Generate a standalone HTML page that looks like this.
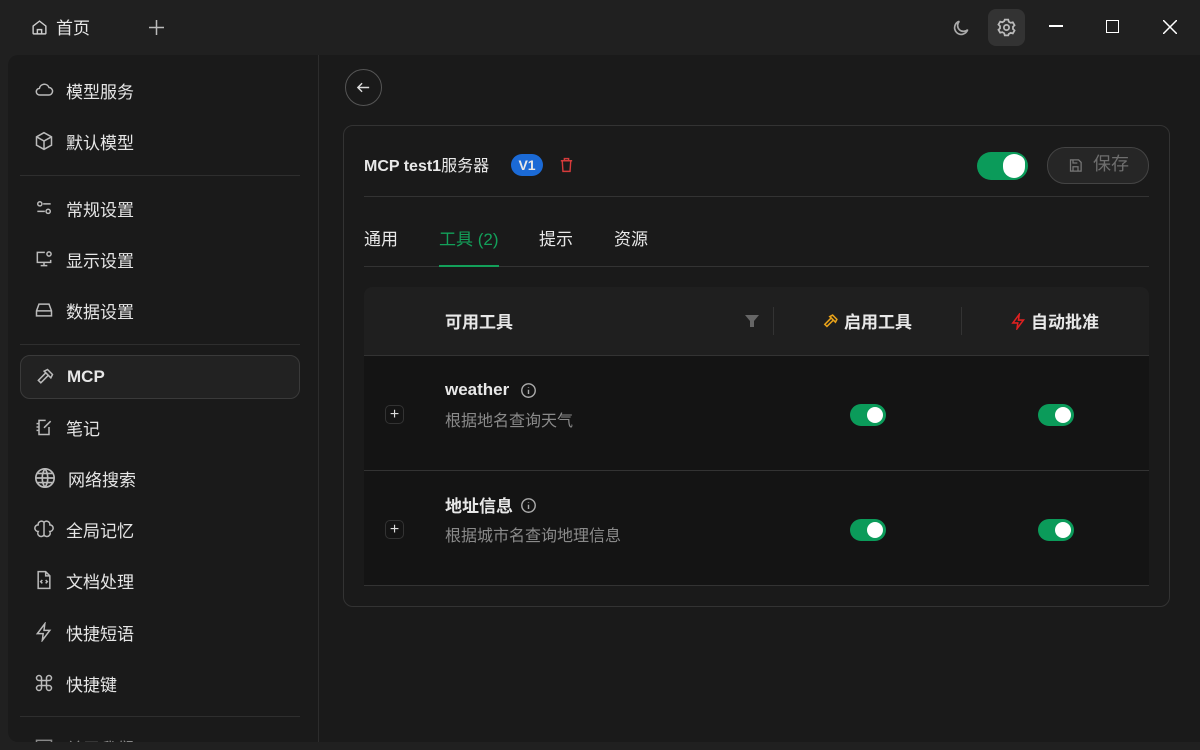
<!DOCTYPE html>
<html><head><meta charset="utf-8"><style>
*{box-sizing:border-box;margin:0;padding:0}
body{width:1200px;height:750px;background:#202020;font-family:"Liberation Sans","Noto Sans CJK SC",sans-serif;color:#e8e8e8;overflow:hidden;position:relative}
.abs{position:absolute}
svg{display:block}
.top{height:55px}
.main{left:8px;top:55px;width:1192px;height:687px;background:#1a1a1a;border-radius:10px 0 0 10px;overflow:hidden}
.side{left:0;top:0;width:311px;height:700px;border-right:1px solid #2c2c2c}
.item{position:absolute;left:12px;width:280px;height:44px;display:flex;align-items:center;padding-left:14px;font-size:17px;color:#e6e6e6}
.item svg{margin-right:12px}
.sep{position:absolute;left:12px;width:280px;height:1px;background:#2e2e2e}
.card{left:335px;top:70px;width:827px;height:482px;border:1px solid #333;border-radius:10px}
.tog{position:absolute;width:36px;height:22px;border-radius:11px;background:#0b9b5a}
.tog:after{content:"";position:absolute;right:3px;top:3px;width:16px;height:16px;border-radius:50%;background:#fff}
</style></head><body>
<svg class="abs" style="left:31px;top:19px" width="17" height="17" viewBox="0 0 24 24" fill="none" stroke="#ccc" stroke-width="2"><path d="M3 10l9-7 9 7v10a1 1 0 0 1-1 1H4a1 1 0 0 1-1-1z"/><path d="M9 21v-6h6v6"/></svg>
<div class="abs" style="left:56px;top:14px;font-size:17px">首页</div>
<svg class="abs" style="left:148px;top:19px" width="17" height="17" viewBox="0 0 17 17" stroke="#bbb" stroke-width="1.5"><path d="M8.5 1v15M1 8.5h15"/></svg>
<svg class="abs" style="left:951px;top:18px" width="20" height="20" viewBox="0 0 24 24" fill="none" stroke="#aaa" stroke-width="2"><path d="M20 14A8 8 0 1 1 10 4a6 6 0 0 0 10 10z"/></svg>
<div class="abs" style="left:988px;top:9px;width:37px;height:37px;border-radius:8px;background:#333"></div>
<svg class="abs" style="left:996px;top:17px" width="21" height="21" viewBox="0 0 24 24" fill="none" stroke="#bbb" stroke-width="2"><circle cx="12" cy="12" r="3"/><path d="M10 3h4l.6 2.4 2.2 1.3 2.4-.7 2 3.4-1.8 1.7v2.6l1.8 1.7-2 3.4-2.4-.7-2.2 1.3L14 21h-4l-.6-2.4-2.2-1.3-2.4.7-2-3.4L4.6 13v-2.6L2.8 8.7l2-3.4 2.4.7 2.2-1.3z"/></svg>
<div class="abs" style="left:1049px;top:25px;width:14px;height:1.5px;background:#fff"></div>
<div class="abs" style="left:1106px;top:20px;width:13px;height:13px;border:1.5px solid #fff"></div>
<svg class="abs" style="left:1163px;top:20px" width="14" height="14" viewBox="0 0 14 14" stroke="#fff" stroke-width="1.5"><path d="M0 0L14 14M14 0L0 14"/></svg>

<div class="abs main">
 <div class="abs side">
  <div class="item" style="top:13px"><svg width="20" height="20" viewBox="0 0 24 24" fill="none" stroke="#bbb" stroke-width="1.8"><path d="M7 18a4 4 0 0 1-.5-8A6 6 0 0 1 18 9a4.5 4.5 0 0 1-.5 9z"/></svg>模型服务</div>
  <div class="item" style="top:64px"><svg width="20" height="20" viewBox="0 0 24 24" fill="none" stroke="#bbb" stroke-width="1.8"><path d="M12 2l9 5v10l-9 5-9-5V7z"/><path d="M3 7l9 5 9-5M12 12v10"/></svg>默认模型</div>
  <div class="sep" style="top:120px"></div>
  <div class="item" style="top:131px"><svg width="20" height="20" viewBox="0 0 24 24" fill="none" stroke="#bbb" stroke-width="1.8"><circle cx="7" cy="7" r="2.5"/><circle cx="17" cy="16" r="2.5"/><path d="M11 7h9M4 16h9"/></svg>常规设置</div>
  <div class="item" style="top:182px"><svg width="20" height="20" viewBox="0 0 24 24" fill="none" stroke="#bbb" stroke-width="1.8"><path d="M13 4H4v12h16v-3M8 20h8M12 16v4"/><circle cx="18" cy="6" r="2.5"/></svg>显示设置</div>
  <div class="item" style="top:233px"><svg width="20" height="20" viewBox="0 0 24 24" fill="none" stroke="#bbb" stroke-width="1.8"><path d="M3 13l3-8h12l3 8v6H3z M3 13h18"/></svg>数据设置</div>
  <div class="sep" style="top:289px"></div>
  <div class="item" style="top:300px;border:1px solid #3a3a3a;background:#222;border-radius:10px;font-weight:bold"><svg width="20" height="20" viewBox="0 0 24 24" fill="none" stroke="#bbb" stroke-width="1.8"><path d="M13 7l-9 9 3 3 9-9M11 5l4-2 6 6-2 4z"/></svg>MCP</div>
  <div class="item" style="top:350px"><svg width="20" height="20" viewBox="0 0 24 24" fill="none" stroke="#bbb" stroke-width="1.8"><path d="M14 4H6v17h12v-9M3 8h3M3 12h3M3 16h3M12 13l8-8"/></svg>笔记</div>
  <div class="item" style="top:401px"><svg width="22" height="22" viewBox="0 0 24 24" fill="none" stroke="#bbb" stroke-width="1.8"><circle cx="12" cy="12" r="10"/><path d="M2 12h20M12 2c-4 5-4 15 0 20M12 2c4 5 4 15 0 20M4 7h16M4 17h16"/></svg>网络搜索</div>
  <div class="item" style="top:452px"><svg width="20" height="20" viewBox="0 0 24 24" fill="none" stroke="#bbb" stroke-width="1.8"><path d="M12 4a4 4 0 0 0-7 3 4 4 0 0 0 0 8 4 4 0 0 0 7 4zM12 4a4 4 0 0 1 7 3 4 4 0 0 1 0 8 4 4 0 0 1-7 4zM12 4v16"/></svg>全局记忆</div>
  <div class="item" style="top:503px"><svg width="20" height="20" viewBox="0 0 24 24" fill="none" stroke="#bbb" stroke-width="1.8"><path d="M14 2H5v20h14V7zM14 2v5h5M10 12l-2 2 2 2M14 12l2 2-2 2"/></svg>文档处理</div>
  <div class="item" style="top:555px"><svg width="20" height="20" viewBox="0 0 24 24" fill="none" stroke="#bbb" stroke-width="1.8"><path d="M13 2L4 14h7l-1 8 9-12h-7z"/></svg>快捷短语</div>
  <div class="item" style="top:606px"><svg width="20" height="20" viewBox="0 0 24 24" fill="none" stroke="#bbb" stroke-width="1.8"><path d="M9 9h6v6H9zM9 9V6a3 3 0 1 0-3 3zM15 9V6a3 3 0 1 1 3 3zM9 15v3a3 3 0 1 1-3-3zM15 15v3a3 3 0 1 0 3-3z"/></svg>快捷键</div>
  <div class="sep" style="top:661px"></div>
  <div class="item" style="top:670px;color:#888"><svg width="20" height="20" viewBox="0 0 24 24" fill="none" stroke="#888" stroke-width="1.8"><rect x="3" y="4" width="18" height="16"/></svg>关于我们</div>
 </div>
 <div class="abs" style="left:337px;top:14px;width:37px;height:37px;border:1px solid #555;border-radius:50%"></div>
 <svg class="abs" style="left:347px;top:24px" width="17" height="17" viewBox="0 0 24 24" fill="none" stroke="#ddd" stroke-width="2"><path d="M20 12H4M10 6l-6 6 6 6"/></svg>
 <div class="abs card">
  <div class="abs" style="left:20px;top:26px;font-size:16px;font-weight:bold">MCP test1<span style="font-weight:normal">服务器</span></div>
  <div class="abs" style="left:167px;top:28px;width:32px;height:22px;border-radius:11px;background:#1b6ad6;font-size:14px;font-weight:bold;text-align:center;line-height:22px">V1</div>
  <svg class="abs" style="left:214px;top:30px" width="17" height="18" viewBox="0 0 24 24" fill="none" stroke="#d63b3b" stroke-width="2"><path d="M4 6h16M9 6V3h6v3M6 6l1 15h10l1-15"/></svg>
  <div class="tog" style="left:633px;top:26px;width:51px;height:28px;border-radius:14px"></div>
  <div class="abs" style="left:659px;top:28px;width:22px;height:24px;border-radius:11px;background:#fff"></div>
  <div class="abs" style="left:703px;top:21px;width:102px;height:37px;border:1px solid #444;border-radius:18px;background:#262626;color:#6e6e6e;font-size:18px;line-height:33px;padding-left:45px">保存</div>
  <svg class="abs" style="left:724px;top:32px" width="15" height="15" viewBox="0 0 24 24" fill="none" stroke="#777" stroke-width="2"><path d="M4 3h13l4 4v14H4zM8 3v5h7M8 21v-7h8v7"/></svg>
  <div class="abs" style="left:20px;top:70px;width:785px;height:1px;background:#333"></div>
  <div class="abs" style="left:20px;top:99px;font-size:17px">通用</div>
  <div class="abs" style="left:95px;top:99px;font-size:17px;color:#13a05a">工具 (2)</div>
  <div class="abs" style="left:195px;top:99px;font-size:17px">提示</div>
  <div class="abs" style="left:270px;top:99px;font-size:17px">资源</div>
  <div class="abs" style="left:20px;top:140px;width:785px;height:1px;background:#333"></div>
  <div class="abs" style="left:95px;top:139px;width:60px;height:2px;background:#13a05a"></div>
  <div class="abs" style="left:20px;top:161px;width:785px;height:69px;background:#1f1f1f;border-radius:8px 8px 0 0;border-bottom:1px solid #333"></div>
  <div class="abs" style="left:101px;top:182px;font-size:17px;font-weight:bold">可用工具</div>
  <svg class="abs" style="left:401px;top:188px" width="14" height="14" viewBox="0 0 14 14" fill="#666"><path d="M0 1h14L9 7v6H5V7z"/></svg>
  <div class="abs" style="left:429px;top:181px;width:1px;height:28px;background:#333"></div>
  <div class="abs" style="left:617px;top:181px;width:1px;height:28px;background:#333"></div>
  <svg class="abs" style="left:478px;top:187px" width="17" height="17" viewBox="0 0 24 24" fill="none" stroke="#e8a21a" stroke-width="2.2"><path d="M13 7l-9 9 3 3 9-9M11 5l4-2 6 6-2 4z"/></svg>
  <div class="abs" style="left:500px;top:182px;font-size:17px;font-weight:bold">启用工具</div>
  <svg class="abs" style="left:666px;top:187px" width="17" height="17" viewBox="0 0 24 24" fill="none" stroke="#e02020" stroke-width="2.2"><path d="M13 2L4 14h7l-1 8 9-12h-7z"/></svg>
  <div class="abs" style="left:687px;top:182px;font-size:17px;font-weight:bold">自动批准</div>
  <div class="abs" style="left:20px;top:230px;width:785px;height:230px;background:#141414"></div>
  <div class="abs" style="left:20px;top:344px;width:785px;height:1px;background:#333"></div>
  <div class="abs" style="left:20px;top:459px;width:785px;height:1px;background:#333"></div>
  <div class="abs" style="left:41px;top:279px;width:19px;height:19px;border:1px solid #333;border-radius:5px;color:#ddd;font-size:16px;line-height:17px;text-align:center">+</div>
  <div class="abs" style="left:101px;top:254px;font-size:17px;font-weight:bold">weather</div>
  <svg class="abs" style="left:176px;top:256px" width="17" height="17" viewBox="0 0 24 24" fill="none" stroke="#aaa" stroke-width="2"><circle cx="12" cy="12" r="9.5"/><path d="M12 11v6M12 7v1"/></svg>
  <div class="abs" style="left:101px;top:281px;font-size:16px;color:#8a8a8a">根据地名查询天气</div>
  <div class="tog" style="left:506px;top:278px"></div>
  <div class="tog" style="left:694px;top:278px"></div>
  <div class="abs" style="left:41px;top:394px;width:19px;height:19px;border:1px solid #333;border-radius:5px;color:#ddd;font-size:16px;line-height:17px;text-align:center">+</div>
  <div class="abs" style="left:101px;top:366px;font-size:17px;font-weight:bold">地址信息</div>
  <svg class="abs" style="left:176px;top:371px" width="17" height="17" viewBox="0 0 24 24" fill="none" stroke="#aaa" stroke-width="2"><circle cx="12" cy="12" r="9.5"/><path d="M12 11v6M12 7v1"/></svg>
  <div class="abs" style="left:101px;top:396px;font-size:16px;color:#8a8a8a">根据城市名查询地理信息</div>
  <div class="tog" style="left:506px;top:393px"></div>
  <div class="tog" style="left:694px;top:393px"></div>
 </div>
</div>
</body></html>
